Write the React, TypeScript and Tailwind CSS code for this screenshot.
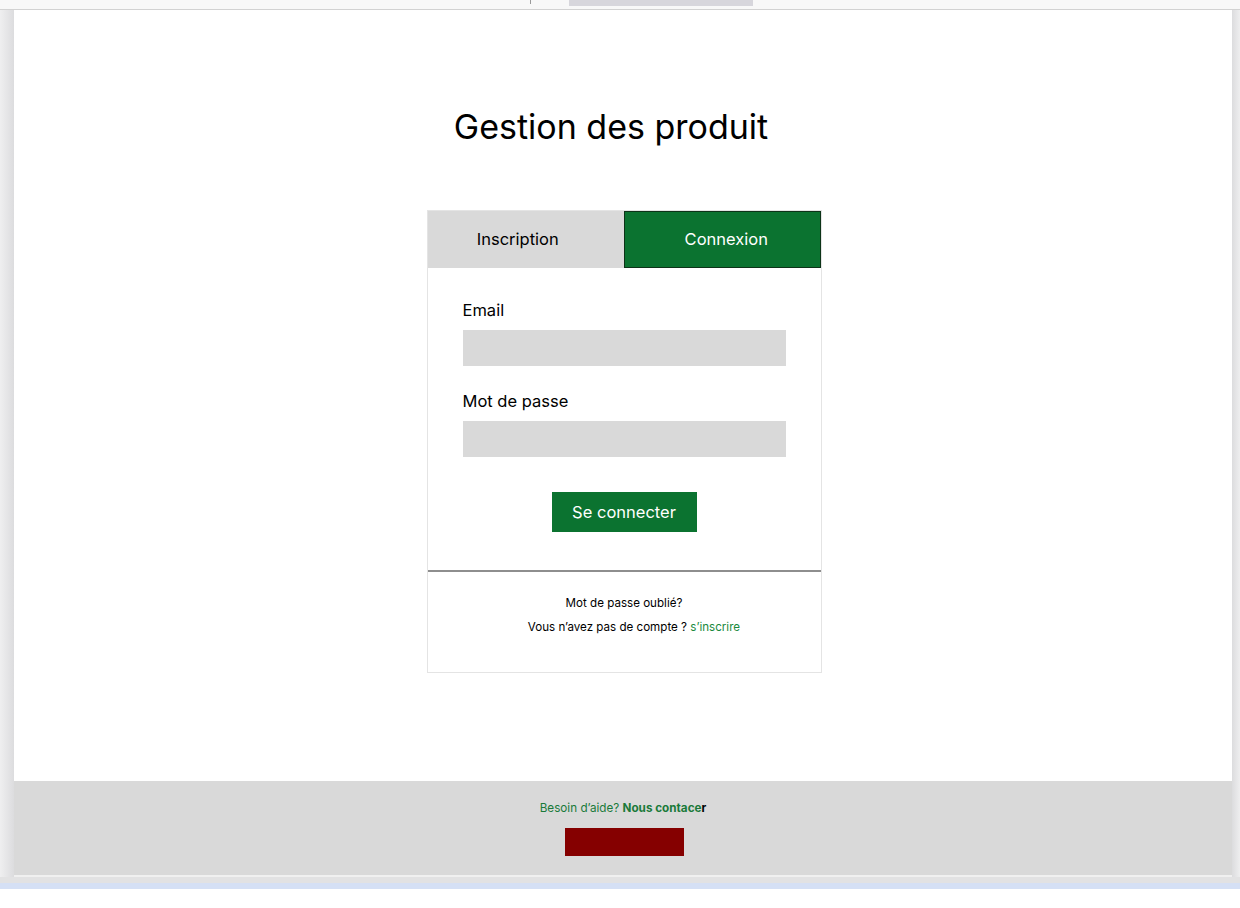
import React from 'react';

export default function App() {
  return (
    <div className="h-screen w-full overflow-hidden bg-white flex flex-col font-['Inter',sans-serif]">
      {/* browser strip */}
      <div className="h-[10px] shrink-0 bg-[#f8f8f8] border-b border-[#d2d2d2] relative">
        <div className="absolute left-[530px] top-0 w-px h-[4px] bg-[#9a9a9a]" />
        <div className="absolute left-[569px] top-0 w-[184px] h-[6px] bg-[#d7d6dc]" />
      </div>

      <div className="flex h-[867px] shrink-0 bg-[#e9e9ea]">
        <div className="w-[14px] bg-gradient-to-r from-[#efeff0] to-[#dcdcde]" />
        <div className="flex-1 flex flex-col bg-white">
          <main className="h-[771px] flex flex-col items-center">
            <h1 className="mt-[96px] mr-[24px] text-[34px] leading-[42px] text-black font-normal">
              Gestion des produit
            </h1>

            <div className="mt-[62px] ml-[2px] w-[395px] border border-[#e4e4e4] bg-white">
              <div className="flex h-[57px]">
                <button className="w-1/2 pr-[16px] bg-[#d9d9d9] text-[16.5px] text-black">Inscription</button>
                <button className="w-1/2 pl-[8px] bg-[#0b7330] border border-[#0d3318] text-[16.5px] text-white">
                  Connexion
                </button>
              </div>

              <form className="px-[35px] pt-[30px] pb-[38px] flex flex-col">
                <label className="text-[16.5px] leading-[24px] text-black">Email</label>
                <input className="mt-[8px] h-[36px] w-full bg-[#d9d9d9] outline-none" />
                <label className="mt-[23px] text-[16.5px] leading-[24px] text-black">Mot de passe</label>
                <input type="password" className="mt-[8px] h-[36px] w-full bg-[#d9d9d9] outline-none" />
                <button
                  type="button"
                  className="mt-[35px] self-center w-[145px] h-[40px] bg-[#0b7330] text-white text-[16.5px]"
                >
                  Se connecter
                </button>
              </form>

              <div className="border-t-2 border-[#8e8e8e] pt-[19px] pb-[33px] flex flex-col items-center text-[11.6px] leading-[24px] text-black">
                <p>Mot de passe oublié?</p>
                <p className="ml-[20px]">
                  Vous n’avez pas de compte ? <span className="text-[#1a8a3e]">s’inscrire</span>
                </p>
              </div>
            </div>
          </main>

          <footer className="h-[96px] bg-[#d9d9d9] border-b-2 border-[#f0f0f0] flex flex-col items-center pt-[19px]">
            <p className="text-[11.7px] leading-[16px] text-[#1a7a3a]">
              Besoin d’aide? <span className="font-bold">Nous contace</span>
              <span className="font-bold text-black">r</span>
            </p>
            <div className="mt-[12px] ml-[2px] w-[119px] h-[28px] bg-[#850000]" />
          </footer>
        </div>
        <div className="w-[8px] bg-gradient-to-r from-[#dcdcde] to-[#eeeeef]" />
      </div>

      <div className="h-[6px] shrink-0 bg-[#e2e2e3]" />
      <div className="h-[6px] shrink-0 bg-[#d5e0f5]" />
      <div className="flex-1 bg-white" />
    </div>
  );
}
